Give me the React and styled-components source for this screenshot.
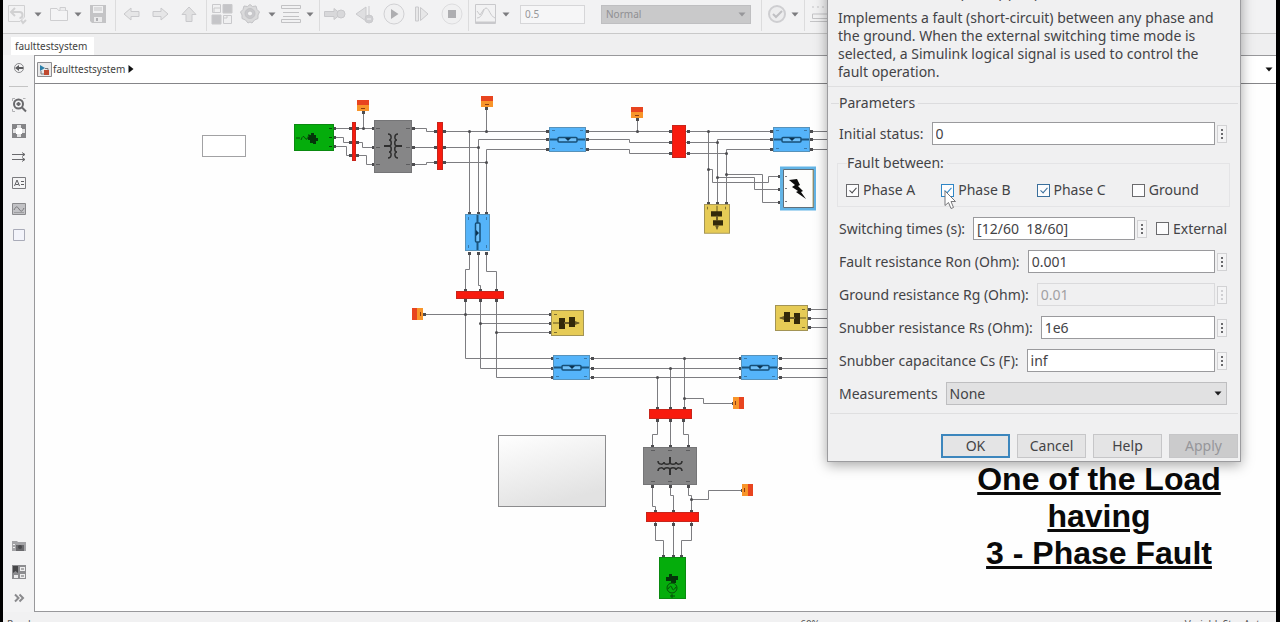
import React from "react";
import styled, { createGlobalStyle, css } from "styled-components";

const ui = `"Noto Sans", sans-serif`;

const GlobalStyle = createGlobalStyle`
  *, *::before, *::after { box-sizing: border-box; }
  body { margin: 0; background: #000; font-family: ${ui}; color: #434346; }
  button, input, select { font: inherit; color: inherit; margin: 0; }
`;

/* ---------- window shell ---------- */

const Window = styled.div`
  position: relative;
  display: flex;
  flex-direction: column;
  height: 100vh;
  overflow: hidden;
  border: solid #000;
  border-width: 0 4px 0 3px;
  background: #f1f1f2;
`;

const Toolbar = styled.header`
  display: flex;
  align-items: center;
  flex: none;
  height: 34px;
  padding: 0 0 5px 1px;
  border-bottom: 1px solid #c9c9c9;
  background: #f2f2f3;
  overflow: hidden;
`;

const ToolButton = styled.button`
  display: flex;
  align-items: center;
  justify-content: center;
  flex: none;
  width: ${(p) => p.$w}px;
  height: 28px;
  padding: 0;
  border: 0;
  background: none;
`;

const ToolIcon = styled.svg`
  opacity: 0.75;
`;

const Divider = styled.span`
  flex: none;
  width: 1px;
  height: 34px;
  margin: 0 3px;
  background: #dcdcdd;
`;

const StopTime = styled.input`
  flex: none;
  width: 65px;
  height: 19px;
  margin: 0 16px 0 8px;
  padding: 0 4px;
  border: 1px solid #d6d6d8;
  background: #f6f6f7;
  color: #97979a;
  font-size: 10px;
`;

const ModeBox = styled.span`
  position: relative;
  flex: none;
  width: 150px;
  margin-right: 7px;
  svg { position: absolute; right: 5px; top: 7px; }
`;

const ModeSelect = styled.select`
  appearance: none;
  display: block;
  width: 100%;
  height: 19px;
  padding: 0 4px;
  border: 1px solid #bfbfc1;
  border-radius: 0;
  background: #c9c9ca;
  color: #8f8f92;
  font-size: 10px;
`;

const TabStrip = styled.nav`
  display: flex;
  align-items: flex-end;
  flex: none;
  height: 21px;
  padding-left: 8px;
  background: #efeff0;
`;

const Tab = styled.a`
  height: 18px;
  padding: 0 7px 0 4px;
  background: #fff;
  color: #3f3f41;
  font-size: 10px;
  line-height: 18px;
  text-decoration: none;
`;

const Body = styled.div`
  display: flex;
  flex: 1;
  min-height: 0;
`;

const Rail = styled.aside`
  display: flex;
  flex-direction: column;
  flex: none;
  width: 31px;
  padding-bottom: 1px;
  background: #f3f3f4;
`;

const RailButton = styled.button`
  display: flex;
  align-items: center;
  justify-content: center;
  flex: none;
  height: 26px;
  padding: 0;
  border: 0;
  background: none;
`;

const RailRule = styled.hr`
  width: 19px;
  margin: 5px auto 5px;
  border: 0;
  border-top: 1px solid #c4c4c4;
`;

const RailSpace = styled.span`
  flex: 1;
`;

const Editor = styled.main`
  display: flex;
  flex-direction: column;
  flex: 1;
  min-width: 0;
  border: solid #98989b;
  border-width: 1px 0 1px 1px;
`;

const Breadcrumb = styled.div`
  display: flex;
  align-items: center;
  flex: none;
  height: 28px;
  padding: 0 3px 1px 2px;
  border-bottom: 1px solid #858588;
  background: #fff;
  font-size: 10px;
  gap: 1px;
`;

const Crumb = styled.a`
  color: #3f3f41;
  text-decoration: none;
  margin-right: 2px;
`;

const CrumbSpace = styled.span`
  flex: 1;
`;

const Canvas = styled.section`
  position: relative;
  flex: 1;
  min-height: 0;
  overflow: hidden;
  background: #fefefe;
  > svg { display: block; }
`;

const Caption = styled.p`
  position: absolute;
  right: 52px;
  top: 377px;
  width: 250px;
  margin: 0;
  color: #0a0a0a;
  font: bold 32px/37px "Liberation Sans", Arial, sans-serif;
  text-align: center;
  text-decoration: underline;
  text-decoration-thickness: 3px;
`;

const StatusBar = styled.footer`
  display: grid;
  grid-template-columns: 63% 1fr auto;
  flex: none;
  height: 10px;
  padding: 5px 10px 0 4px;
  overflow: hidden;
  background: #f1f1f2;
  color: #555;
  font-size: 10px;
  line-height: 14px;
`;

/* ---------- block parameters dialog ---------- */

const Dialog = styled.form`
  position: absolute;
  top: -18px;
  right: 35px;
  width: 414px;
  border: 1px solid #9c9c9f;
  background: #f0f0f1;
  box-shadow: 0 3px 12px rgba(0, 0, 0, 0.35);
  font-size: 14px;
  line-height: 18px;
  white-space: nowrap;
`;

const Intro = styled.div`
  padding: 1px 12px 5px 10px;
  border-bottom: 1px solid #dfdfe0;
`;

const MaskTitle = styled.h1`
  margin: 0 0 7px;
  font-size: 14px;
  font-weight: 400;
  line-height: 18px;
`;

const Description = styled.p`
  margin: 0;
`;

const Parameters = styled.fieldset`
  display: flex;
  flex-direction: column;
  gap: 10px;
  min-width: 0;
  margin: 7px 2px 0 3px;
  padding: 10px 11px 0 8px;
  border: 0;
  border-top: 1px solid #dcdcde;
`;

const Legend = styled.legend`
  margin-left: ${(p) => p.$inset || 0}px;
  padding: 0 3px 0 0;
  line-height: ${(p) => p.$line || 18}px;
`;

const PhaseGroup = styled.fieldset`
  display: grid;
  grid-template-columns: repeat(4, 1fr);
  min-width: 0;
  margin: 0 -3px 0 -2px;
  padding: 9px 2px 6px 8px;
  border: 1px solid #e4e4e6;
`;

const Row = styled.div`
  display: flex;
  align-items: center;
  height: 23px;
`;

const FieldLabel = styled.label`
  flex: none;
  margin-right: 8px;
`;

const TextBox = styled.input`
  flex: 1;
  min-width: 0;
  height: 23px;
  padding: 0 3px;
  border: 1px solid #9a9a9d;
  background: #fff;
  &:disabled { border-color: #dadadc; background: #f0f0f1; color: #a0a0a3; }
`;

const MoreButton = styled.button`
  display: flex;
  flex: none;
  align-items: center;
  justify-content: center;
  width: 10px;
  height: 18px;
  margin-left: 2px;
  padding: 0;
  border: 1px solid #d2d2d4;
  background: #f4f4f5;
  color: #6a6a6d;
  &:disabled { color: #cfcfd2; }
`;

const CheckLabel = styled.label`
  position: relative;
  display: flex;
  align-items: center;
  height: 20px;
  gap: 4px;
  ${(p) => p.$side && css`margin-left: 9px;`}
`;

const tick = (color) => css`
  &:checked::after {
    content: "";
    position: absolute;
    left: 4px;
    top: 1px;
    width: 4px;
    height: 7px;
    border: solid ${color};
    border-width: 0 1px 1px 0;
    transform: rotate(42deg);
  }
`;

const Check = styled.input`
  appearance: none;
  position: relative;
  flex: none;
  width: 13px;
  height: 13px;
  border: 1px solid ${(p) => p.$edge || "#6a6a6d"};
  background: #fcfcfd;
  ${(p) => tick(p.$edge || "#48484b")}
`;

const Pointer = styled.svg`
  position: absolute;
  left: 3px;
  top: 10px;
`;

const PickBox = styled.span`
  position: relative;
  flex: 1;
  svg { position: absolute; right: 5px; top: 9px; pointer-events: none; }
`;

const Pick = styled.select`
  appearance: none;
  display: block;
  width: 100%;
  height: 23px;
  padding: 0 3px;
  border: 1px solid #bebec0;
  border-radius: 0;
  background: #e1e1e2;
`;

const Actions = styled.div`
  display: flex;
  justify-content: flex-end;
  gap: 7px;
  margin: 8px 2px 0;
  padding: 20px 0 3px;
  border-top: 1px solid #dfdfe0;
`;

const ActionButton = styled.button`
  width: 69px;
  height: 24px;
  padding: 0;
  border: ${(p) => (p.$primary ? "2px solid #3c86bd" : "1px solid #c6c6c8")};
  background: #e4e4e5;
  line-height: 18px;
  &:disabled { background: #cbcbcc; color: #96969a; }
`;

/* ---------- small drawings ---------- */

const Caret = ({ fill = "#7b7b7e" }) => (
  <svg width="8" height="5" viewBox="0 0 8 5" aria-hidden="true">
    <path d="M0.5 0.5H7.5L4 4.5Z" fill={fill} />
  </svg>
);

const Dots = () => (
  <svg width="2" height="10" viewBox="0 0 2 10" aria-hidden="true">
    <path d="M0 0h2v2H0zM0 4h2v2H0zM0 8h2v2H0z" fill="currentColor" />
  </svg>
);

const toolArt = {
  undo: (
    <g fill="none" stroke="#c6c6c8">
      <path d="M2.500 2.500H18.500V14L14 18.500H2.500Z" fill="#f3f3f4" />
      <path d="M6 9H13.500A3 3 0 0 1 13.500 15" strokeWidth="2" />
      <path d="M9 5L5 9L9 13" strokeWidth="2" />
      <path d="M15 17l2 3 3-3" strokeWidth="2" />
    </g>
  ),
  open: (
    <g fill="#ececed" stroke="#c2c2c5">
      <path d="M2.500 5.500H9L10.500 7.500H19.500V17.500H2.500Z" fill="#f5f5f6" />
      <path d="M12 7.500V4.500H17.500V7.500M3 17.500H19" />
    </g>
  ),
  save: (
    <g>
      <path d="M3 2H19V20H5L3 18Z" fill="#b5b5b8" />
      <path d="M6 3H16V10H6Z" fill="#f0f0f1" />
      <path d="M7 5H15M7 7H15" stroke="#b5b5b8" />
      <path d="M7 14H15V19H7Z" fill="#e8e8e9" />
      <path d="M9 15h2v3h-2z" fill="#9b9b9e" />
    </g>
  ),
  left: <path d="M3 11L10 5V8.500H18V13.500H10V17Z" fill="#e2e2e3" stroke="#bcbcbf" />,
  right: <path d="M19 11L12 5V8.500H4V13.500H12V17Z" fill="#e2e2e3" stroke="#bcbcbf" />,
  up: <path d="M11 4L18 11.500H14V18.500H8V11.500H4Z" fill="#dcdcdd" stroke="#bcbcbf" />,
  library: (
    <g stroke="#bcbcbf">
      <path d="M1.500 1.500H9.500V9.500H1.500ZM12.500 12.500H20.500V20.500H12.500Z" fill="#f0f0f1" />
      <path d="M12 1.500H21V10H12ZM1 12H10V21H1Z" fill="#b7b7ba" />
      <path d="M12 15h4v-3M3 9v-4h6" fill="none" />
    </g>
  ),
  gear: (
    <g fill="none" stroke="#b4b4b7">
      <path d="M11 1.500L13.500 3.500L17 3L18 6.500L20.500 9L19 12L19 15.500L15.500 17L13 20L11 19L9 20L6.500 17L3 15.500L3 12L1.500 9L4 6.500L5 3L8.500 3.500Z" fill="#d2d2d4" />
      <circle cx="11" cy="10.500" r="5" fill="#bcbcbf" />
      <circle cx="11" cy="10.500" r="2.500" fill="#f2f2f3" />
    </g>
  ),
  lines: (
    <g fill="#f1f1f2" stroke="#b2b2b5">
      <path d="M1.500 2.500H20.500V5.500H1.500ZM3 9.500H19M3 13.500H19M1.500 16.500H20.500V19.500H1.500Z" />
    </g>
  ),
  run: (
    <g fill="#d0d0d2" stroke="#bbbbbe">
      <path d="M0.500 8.500H10V5.500L17 11L10 16.500V13.500H0.500Z" />
      <circle cx="17" cy="11" r="4" />
    </g>
  ),
  back: (
    <g fill="#d8d8da" stroke="#bdbdc0">
      <path d="M12 4V18L2 11ZM15 3V12" />
      <circle cx="15" cy="16" r="4" fill="#c4c4c7" />
      <path d="M13 16h4" stroke="#f4f4f5" />
    </g>
  ),
  play: (
    <g>
      <circle cx="11" cy="11" r="10" fill="#f0f0f1" stroke="#c6c6c9" />
      <path d="M8 6V16L15.500 11Z" fill="#98989b" />
    </g>
  ),
  next: (
    <g fill="#e4e4e5" stroke="#bdbdc0">
      <path d="M4.500 4V18H7.500V4ZM9.500 4.500V17.500L17 11Z" />
    </g>
  ),
  stop: (
    <g>
      <circle cx="11" cy="11" r="10" fill="#f0f0f1" stroke="#d6d6d8" />
      <path d="M7 7h8v8H7z" fill="#98989b" />
    </g>
  ),
  scope: (
    <g fill="none" stroke="#bcbcbf">
      <path d="M0.500 1.500H20.500V20.500H0.500Z" fill="#f3f3f4" />
      <path d="M2 15C8 15 8 5 11 5S15 13 20 15M2 8L5 12L9 6" />
      <path d="M1 19.500H20" strokeWidth="2" />
    </g>
  ),
  check: (
    <g>
      <circle cx="11" cy="11" r="8" fill="#ececed" stroke="#c3c3c6" strokeWidth="2" />
      <path d="M7 11l3 3 6-6" fill="none" stroke="#b0b0b3" strokeWidth="2" />
    </g>
  ),
  schedule: (
    <g fill="none" stroke="#b5b5b8">
      <path d="M4 3v3M9 3v3M14 3v3M19 3v3" strokeDasharray="2 1" />
      <path d="M3.500 11H22V15.500H3.500ZM1 18.500H22" />
    </g>
  ),
};

const Tool = ({ name, label, w }) => (
  <ToolButton type="button" aria-label={label} $w={w}>
    <ToolIcon width="22" height="22" viewBox="0 0 22 22" aria-hidden="true">{toolArt[name]}</ToolIcon>
  </ToolButton>
);

const Drop = ({ label, w = 12 }) => (
  <ToolButton type="button" aria-label={label} $w={w}>
    <Caret />
  </ToolButton>
);

const railArt = {
  hide: (
    <g>
      <circle cx="8" cy="8" r="4.500" fill="none" stroke="#8b8b8e" />
      <path d="M4 8L8 5V7H12V9H8V11Z" fill="#5c5c5f" />
    </g>
  ),
  zoom: (
    <g fill="none" stroke="#6a6a6d">
      <path d="M1.500 4V1.500H4M12 1.500H14.500M1.500 12V14.500H4" stroke="#b0b0b3" />
      <circle cx="7.500" cy="7" r="4.500" strokeWidth="2" />
      <path d="M5.500 7H9.500M7.500 5V9M11 10.500L15 14.500" strokeWidth="2" />
    </g>
  ),
  fit: (
    <g>
      <path d="M1 1H15V15H1Z" fill="#858588" />
      <path d="M6 2H10V6H14V10H10V14H6V10H2V6H6Z" fill="#e4e4e5" />
      <path d="M5 5H11V11H5Z" fill="#fff" />
    </g>
  ),
  flow: (
    <g fill="none" stroke="#6a6a6d">
      <path d="M1 5.500H14M1 10.500H14" />
      <path d="M11 3.500L14 5.500L11 7.500M11 8.500L14 10.500L11 12.500" />
    </g>
  ),
  image: (
    <g>
      <path d="M1.500 2.500H14.500V13.500H1.500Z" fill="#c2c2c5" stroke="#8a8a8d" />
      <path d="M3 9C5 5 6 5 8 8S11 11 13 7" fill="none" stroke="#77777a" />
      <path d="M3 11.500H13" stroke="#9d9da0" />
    </g>
  ),
  area: <path d="M2.500 2.500H13.500V13.500H2.500Z" fill="#f3f4fb" stroke="#a9abb8" />,
  note: (
    <g fill="none" stroke="#7b7b7e">
      <path d="M1.500 2.500H14.500V13.500H1.500Z" fill="#f4f4f5" />
      <path d="M3.500 11L6 5L8.500 11M4.500 9.500H7.500M10 6.500H13M10 9.500H13" stroke="#5f5f62" />
    </g>
  ),
  camera: (
    <g>
      <path d="M1 3H6L7 4H15V13H1Z" fill="#a3a3a6" />
      <path d="M5 7H13V13H5Z" fill="#6a6a6d" />
      <circle cx="9" cy="9" r="2" fill="#48484b" />
      <path d="M2 6h2v1H2zM2 9h2v1H2z" fill="#eee" />
    </g>
  ),
  browser: (
    <g>
      <path d="M1 1H15V15H1Z" fill="#8d8d90" />
      <path d="M2 2H7V9L4.500 7L2 9Z" fill="#464648" />
      <path d="M9 3H14V7H9ZM9 10H14V14H9ZM3 11H7V14H3Z" fill="#ededee" />
      <path d="M10 5h3M10 12h3" stroke="#6c6c6f" />
    </g>
  ),
  more: <path d="M4 4.500L7.500 8L4 11.500M8.500 4.500L12 8L8.500 11.500" fill="none" stroke="#8a8a8d" strokeWidth="2" />,
};

const RailTool = ({ name, label }) => (
  <RailButton type="button" aria-label={label}>
    <svg width="16" height="16" viewBox="0 0 16 16" aria-hidden="true">{railArt[name]}</svg>
  </RailButton>
);

/* ---------- power system diagram ---------- */

const wires = [
  "M333 128.500H375", "M333 137.500H343.500V142.500H362.500V147.500H375", "M333 146.500H346.500V155.500H366.500V164.500H375",
  "M363.500 112V128.500", "M411 128.500H426.500V131.500H550", "M411 147.500H478.500V139.500H550",
  "M411 164.500H426.500V162.500H486.500V149.500H550", "M486.500 107V131.500",
  "M469.500 131.500V215", "M478.500 147.500V215", "M486.500 162.500V215",
  "M469.500 252V269.500H465.500V358.500H554", "M478.500 252V285.500H480.500V368.500H554", "M486.500 252V271.500H496.500V377.500H554",
  "M423 314.500H552", "M480 323.500H552", "M496 332.500H552",
  "M585 131.500H672", "M585 139.500H629.500V142.500H672", "M585 149.500H629.500V153.500H672", "M637.500 118V131.500",
  "M686 131.500H774", "M686 142.500H717.500V139.500", "M717.500 139.500H774", "M686 153.500H726.500V149.500H774",
  "M708.500 131.500V205", "M717.500 142.500V205", "M726.500 153.500V205",
  "M708.500 169.500H712.500V182.500H768.500V176.500H781", "M717.500 177.500H754.500V189.500H781", "M726.500 174.500H762.500V202.500H781",
  "M809 131.500H840", "M809 139.500H840", "M809 149.500H840", "M807 309.500H840", "M807 318.500H840", "M807 327.500H840",
  "M590 358.500H742", "M590 368.500H742", "M590 377.500H742", "M778 358.500H840", "M778 368.500H840", "M778 377.500H840",
  "M684.500 358.500V410", "M670.500 368.500V410", "M657.500 377.500V410", "M684.500 398.500H703.500V403.500H735",
  "M657.500 419V434.500H652.500V448", "M670.500 419V448", "M683.500 419V434.500H688.500V448",
  "M652.500 485V506.500H655.500V513", "M670.500 485V495.500H673.500V513", "M688.500 485V495.500H691.500V513",
  "M691.500 499.500H708.500V490.500H744",
  "M655.500 522V540.500H663.500V558", "M673.500 522V558", "M691.500 522V540.500H681.500V558",
];

const joints = [
  [363, 128], [486, 131], [469, 131], [478, 147], [486, 162], [465, 314], [480, 323], [496, 332], [637, 131],
  [708, 131], [717, 142], [726, 153], [708, 169], [717, 177], [726, 174], [684, 358], [670, 368], [657, 377],
  [684, 398], [691, 499],
];

const ports = [
  [334, 128], [334, 137], [334, 146], [350, 128], [350, 142], [350, 155], [357, 128], [357, 142], [357, 155],
  [373, 128], [373, 147], [373, 164], [413, 128], [413, 147], [413, 164], [435, 131], [435, 147], [435, 162],
  [444, 131], [444, 147], [444, 162], [547, 131], [547, 139], [547, 149], [587, 131], [587, 139], [587, 149],
  [469, 213], [478, 213], [486, 213], [469, 253], [478, 253], [486, 253], [465, 290], [480, 290], [496, 290],
  [465, 300], [480, 300], [496, 300], [550, 314], [550, 323], [550, 332], [424, 314], [552, 358], [552, 368],
  [552, 377], [592, 358], [592, 368], [592, 377], [740, 358], [740, 368], [740, 377], [780, 358], [780, 368],
  [780, 377], [809, 309], [809, 318], [809, 327], [670, 131], [670, 142], [670, 153], [688, 131], [688, 142],
  [688, 153], [771, 131], [771, 139], [771, 149], [811, 131], [811, 139], [811, 149], [708, 203], [717, 203],
  [726, 203], [779, 176], [779, 189], [779, 202], [657, 408], [670, 408], [684, 408], [657, 420], [670, 420],
  [683, 420], [652, 446], [670, 446], [688, 446], [652, 486], [670, 486], [688, 486], [655, 511], [673, 511],
  [691, 511], [655, 524], [673, 524], [691, 524], [663, 556], [673, 556], [681, 556], [733, 403], [742, 490],
  [363, 112], [486, 108], [637, 119],
];

const Bus = ({ x, y, w, h }) => (
  <rect x={x + 0.5} y={y + 0.5} width={w - 1} height={h - 1} fill="#f81b0e" stroke="#c8251b" />
);

const LineBlock = ({ x, y, vertical }) => (
  <g transform={`translate(${x} ${y})${vertical ? " matrix(0 1 1 0 0 0)" : ""}`}>
    <rect x="0.500" y="0.500" width="36" height="24" fill="#55b4fa" stroke="#5792ba" />
    <path d="M1 12.500H9M28 12.500H36" stroke="#1c5680" strokeWidth="2" />
    <rect x="9" y="10.500" width="19" height="4.500" rx="1" fill="#6fc0fa" stroke="#174f78" strokeWidth="1.500" />
    <path d="M16 11H22L19 14Z" fill="#0d3350" />
    <path d="M3 3.500h3M31 3.500h3M3 21.500h3M31 21.500h3" stroke="#3a7aaa" />
  </g>
);

const LoadBlock = ({ x, y, turn }) => (
  <g transform={`translate(${x} ${y}) ${turn}`}>
    <rect x="0.500" y="0.500" width="32" height="25" fill="#e6cb56" stroke="#a39455" />
    <path d="M2 13H28" stroke="#5d501f" />
    <path d="M8 8H14V19H8ZM18 7H24V17H18Z" fill="#33290a" />
    <path d="M13 12h5v2h-5zM24 11L29 13L24 15Z" fill="#6d5d27" />
    <path d="M3 4.500h3M3 22.500h3" stroke="#7d6d2d" />
  </g>
);

const Scope = ({ x, y, angle = 0 }) => (
  <g transform={`translate(${x} ${y}) rotate(${angle})`}>
    <rect x="-6" y="-5" width="12" height="11" fill="#f8952a" />
    <rect x="-6" y="-5" width="12" height="5" fill="#e8441f" />
    <path d="M-2 3.500H2" stroke="#8e3c10" />
  </g>
);

const Windings = () => (
  <g fill="none" stroke="#2f2f2f" strokeWidth="1.500">
    <path d="M-12 -5C-12 -1 -6 -1 -6 -4C-6 -1 0 -1 0 -4C0 -1 6 -1 6 -4C6 -1 12 -1 12 -5" />
    <path d="M-12 5C-12 1 -6 1 -6 4C-6 1 0 1 0 4C0 1 6 1 6 4C6 1 12 1 12 5" />
    <path d="M0 -9V-3M0 3V9" strokeWidth="2" />
  </g>
);

const Diagram = () => (
  <svg width="1240" height="528" viewBox="35 84 1240 528" role="img" aria-label="Three-phase power system model">
    <defs>
      <linearGradient id="panel" x1="0" y1="0" x2="0.400" y2="1">
        <stop offset="0" stopColor="#fff" />
        <stop offset="1" stopColor="#e2e2e2" />
      </linearGradient>
    </defs>
    <rect x="202.500" y="135.500" width="43" height="21" fill="#fff" stroke="#a2a2a4" />
    <rect x="498.500" y="435.500" width="107" height="71" fill="url(#panel)" stroke="#8c8c8e" />
    <g fill="none" stroke="#7d7d81" strokeWidth="1">
      {wires.map((d) => <path key={d} d={d} />)}
    </g>
    <g fill="#4c4c4f">
      {joints.map(([x, y]) => <circle key={`${x}-${y}`} cx={x + 0.5} cy={y + 0.5} r="1.500" />)}
      {ports.map(([x, y]) => <rect key={`${x}-${y}`} x={x - 1} y={y - 1} width="3" height="3" />)}
    </g>

    <rect x="294.500" y="124.500" width="39" height="26" fill="#05ad0c" stroke="#0a8a10" />
    <path d="M296 138h4M301 140q2-6 4-2t4-4" fill="none" stroke="#064d09" strokeWidth="1" />
    <path d="M309 135h2v-2h3v2h2v3h2v3h-2v3h-3v-1h-3v-3h-2v-3h1z" fill="#04360a" />
    <path d="M329 128.500h3M329 137.500h3M329 146.500h3" stroke="#064d09" />

    <rect x="659.500" y="557.500" width="26" height="41" fill="#05ad0c" stroke="#0a8a10" />
    <path d="M666 577h3v-3h3v2h6v4h-2v3h-5v-2h-5z" fill="#04360a" />
    <circle cx="672" cy="588" r="5" fill="none" stroke="#064d09" />
    <path d="M668 589q3-5 4-1t4-1M672 594v4M670 596h5" fill="none" stroke="#064d09" />

    <rect x="374.500" y="120.500" width="37" height="52" fill="#868687" stroke="#757577" />
    <g transform="translate(393 146) rotate(90)"><Windings /></g>
    <path d="M376 128.500h4M376 147.500h4M376 164.500h4M406 128.500h4M406 147.500h4M406 164.500h4" stroke="#5c5c5e" />
    <rect x="643.500" y="447.500" width="53" height="37" fill="#868687" stroke="#757577" />
    <g transform="translate(670 466)"><Windings /></g>
    <path d="M651 450.500h4M668 450.500h4M686 450.500h4M651 481.500h4M668 481.500h4M686 481.500h4" stroke="#5c5c5e" />

    <Bus x={352} y={122} w={4} h={39} />
    <Bus x={437} y={122} w={6} h={48} />
    <Bus x={672} y={125} w={14} h={33} />
    <Bus x={456} y={291} w={48} h={8} />
    <Bus x={649} y={409} w={43} h={10} />
    <Bus x={646} y={512} w={53} h={10} />

    <LineBlock x={549} y={127} />
    <LineBlock x={773} y={127} />
    <LineBlock x={553} y={355} />
    <LineBlock x={741} y={355} />
    <LineBlock x={465} y={214} vertical />

    <LoadBlock x={551} y={310} turn="" />
    <LoadBlock x={808} y={305} turn="scale(-1 1)" />
    <LoadBlock x={730} y={204} turn="rotate(90) scale(0.900 1)" />

    <Scope x={363} y={105} />
    <Scope x={487} y={101} />
    <Scope x={637} y={112} />
    <Scope x={417} y={314} angle={-90} />
    <Scope x={739} y={403} angle={90} />
    <Scope x={748} y={490} angle={90} />

    <rect x="781.500" y="168" width="33" height="41" fill="#fdfdfc" stroke="#62b4e6" strokeWidth="3" />
    <path d="M783.500 169.500H813.500V207.500H783.500Z" fill="none" stroke="#5f6f7a" />
    <path d="M813 170V207" stroke="#b3a878" />
    <path d="M789 180L797 179L800 185L798 186L803 191L801 192L806 199L796 192L798 191L792 187L795 185Z" fill="#0c0c0c" />
    <path d="M785 176.500h2M785 188.500h2M785 201.500h2" stroke="#77777a" />
  </svg>
);

/* ---------- form parts ---------- */

const Field = ({ id, label, value, disabled, children }) => (
  <Row>
    <FieldLabel htmlFor={id}>{label}</FieldLabel>
    <TextBox id={id} defaultValue={value} disabled={disabled} />
    <MoreButton type="button" aria-label={`${label} options`} disabled={disabled}><Dots /></MoreButton>
    {children}
  </Row>
);

const CheckField = ({ label, checked, edge, side, children }) => (
  <CheckLabel $side={side}>
    <Check type="checkbox" defaultChecked={checked} $edge={edge} />
    {label}
    {children}
  </CheckLabel>
);

export default function App() {
  return (
    <Window>
      <GlobalStyle />
      <Toolbar>
        <Tool name="undo" label="New model" w={26} />
        <Drop label="New options" w={16} />
        <Tool name="open" label="Open" w={26} />
        <Drop label="Open options" />
        <Tool name="save" label="Save" w={28} />
        <Divider />
        <Tool name="left" label="Back" w={26} />
        <Tool name="right" label="Forward" w={30} />
        <Tool name="up" label="Up to parent" w={28} />
        <Divider />
        <Tool name="library" label="Library browser" w={24} />
        <Tool name="gear" label="Model configuration" w={32} />
        <Drop label="Configuration options" />
        <Tool name="lines" label="Model explorer" w={26} />
        <Drop label="Explorer options" />
        <Divider />
        <Tool name="run" label="Update model" w={24} />
        <Tool name="back" label="Step back" w={36} />
        <Tool name="play" label="Run" w={22} />
        <Tool name="next" label="Step forward" w={34} />
        <Tool name="stop" label="Stop" w={26} />
        <Divider />
        <Tool name="scope" label="Data inspector" w={28} />
        <Drop label="Inspector options" />
        <StopTime aria-label="Simulation stop time" defaultValue="0.5" />
        <ModeBox>
          <ModeSelect aria-label="Simulation mode"><option>Normal</option></ModeSelect>
          <Caret fill="#97979a" />
        </ModeBox>
        <Divider />
        <Tool name="check" label="Model advisor" w={24} />
        <Drop label="Advisor options" />
        <Divider />
        <Tool name="schedule" label="Build" w={24} />
      </Toolbar>
      <TabStrip>
        <Tab href="#model">faulttestsystem</Tab>
      </TabStrip>
      <Body>
        <Rail>
          <RailTool name="hide" label="Hide browser" />
          <RailRule />
          <RailTool name="zoom" label="Zoom" />
          <RailTool name="fit" label="Fit to view" />
          <RailTool name="flow" label="Signal lines" />
          <RailTool name="note" label="Annotation" />
          <RailTool name="image" label="Image" />
          <RailTool name="area" label="Area" />
          <RailSpace />
          <RailTool name="camera" label="Screenshot" />
          <RailTool name="browser" label="Model browser" />
          <RailTool name="more" label="More" />
        </Rail>
        <Editor>
          <Breadcrumb>
            <svg width="15" height="15" viewBox="0 0 15 15" aria-hidden="true">
              <path d="M0.500 0.500H14.500V14.500H0.500Z" fill="#e9e9ea" stroke="#8e8e91" />
              <path d="M3 3L8 6L3 9Z" fill="#2b7fa8" />
              <path d="M7 8H12V13H7Z" fill="#c0492f" />
              <path d="M8 6.500H11V8M4 9V12H7" fill="none" stroke="#77777a" />
            </svg>
            <Crumb href="#model">faulttestsystem</Crumb>
            <svg width="6" height="8" viewBox="0 0 6 8" aria-hidden="true"><path d="M0.500 0L5.500 4L0.500 8Z" fill="#111" /></svg>
            <CrumbSpace />
            <Caret fill="#111" />
          </Breadcrumb>
          <Canvas>
            <Diagram />
            <Caption>One of the Load<br />having<br />3 - Phase Fault</Caption>
          </Canvas>
        </Editor>
      </Body>
      <StatusBar>
        <span>Ready</span>
        <span>60%</span>
        <span>VariableStepAuto</span>
      </StatusBar>

      <Dialog onSubmit={(e) => e.preventDefault()}>
        <Intro>
          <MaskTitle>Three-Phase Fault (mask) (link)</MaskTitle>
          <Description>
            Implements a fault (short-circuit) between any phase and<br />
            the ground. When the external switching time mode is<br />
            selected, a Simulink logical signal is used to control the<br />
            fault operation.
          </Description>
        </Intro>
        <Parameters>
          <Legend>Parameters</Legend>
          <Field id="initial" label="Initial status:" value="0" />
          <PhaseGroup>
            <Legend $inset={1} $line={16}>Fault between:</Legend>
            <CheckField label="Phase A" checked />
            <CheckField label="Phase B" checked edge="#2f86c6">
              <Pointer width="13" height="20" viewBox="0 0 13 20" aria-hidden="true">
                <path d="M1 1V15.500L4.500 12.500L7 18.500L9.500 17.500L7 11.500H11.500Z" fill="#fff" stroke="#77777a" />
              </Pointer>
            </CheckField>
            <CheckField label="Phase C" checked edge="#3a6f9c" />
            <CheckField label="Ground" />
          </PhaseGroup>
          <Field id="times" label="Switching times (s):" value="[12/60  18/60]">
            <CheckField label="External" side />
          </Field>
          <Field id="ron" label="Fault resistance Ron (Ohm):" value="0.001" />
          <Field id="rg" label="Ground resistance Rg (Ohm):" value="0.01" disabled />
          <Field id="rs" label="Snubber resistance Rs (Ohm):" value="1e6" />
          <Field id="cs" label="Snubber capacitance Cs (F):" value="inf" />
          <Row>
            <FieldLabel htmlFor="meas">Measurements</FieldLabel>
            <PickBox>
              <Pick id="meas"><option>None</option></Pick>
              <Caret fill="#1c1c1e" />
            </PickBox>
          </Row>
        </Parameters>
        <Actions>
          <ActionButton type="submit" $primary>OK</ActionButton>
          <ActionButton type="button">Cancel</ActionButton>
          <ActionButton type="button">Help</ActionButton>
          <ActionButton type="button" disabled>Apply</ActionButton>
        </Actions>
      </Dialog>
    </Window>
  );
}
